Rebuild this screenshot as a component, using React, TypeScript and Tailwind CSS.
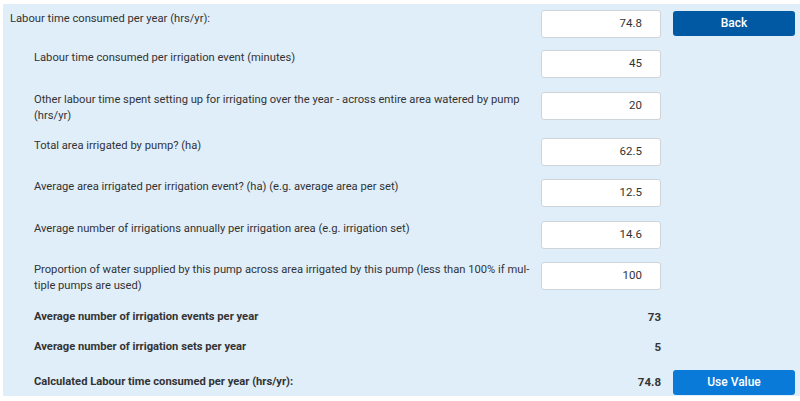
import React from "react";

const font = { fontFamily: "Roboto, 'Liberation Sans', Arial, sans-serif" };

function Input({ value }: { value: string }) {
  return (
    <div className="w-[120px] h-[28px] shrink-0 bg-white border border-[#cfd4d9] rounded-[3px] flex items-center justify-end pr-[18px] text-[11.5px] text-[#333]">
      {value}
    </div>
  );
}

function Row({
  label,
  value,
  className = "",
}: {
  label: React.ReactNode;
  value: string;
  className?: string;
}) {
  return (
    <div className={`flex items-start ${className}`}>
      <div className="flex-1 pl-6 pr-[4px] text-[11.2px] leading-4 text-[#333]">{label}</div>
      <Input value={value} />
      <div className="w-[122px] ml-[12px] shrink-0" />
    </div>
  );
}

function Calc({ label, value, button }: { label: string; value: string; button?: React.ReactNode }) {
  return (
    <div className="flex items-center">
      <div className="flex-1 pl-6 text-[11.2px] leading-4 font-bold text-[#333]">{label}</div>
      <div className="w-[120px] shrink-0 text-right text-[11.5px] leading-4 font-bold text-[#333]">{value}</div>
      <div className="w-[122px] ml-[12px] shrink-0">{button}</div>
    </div>
  );
}

export default function App() {
  return (
    <div className="w-[800px] h-[401px] bg-white pt-[4px] pl-[3px]" style={font}>
      <div className="bg-[#e0eefa] h-[392px] pl-[7px] pr-[5px] pt-[6px]">
        <div className="flex flex-col">
          <div className="flex items-start">
            <div className="flex-1 pr-[4px] text-[11.2px] leading-4 pt-[1px] text-[#333]">
              Labour time consumed per year (hrs/yr):
            </div>
            <Input value="74.8" />
            <div className="w-[122px] ml-[12px] shrink-0">
              <button className="w-full h-[25px] -mt-[1px] rounded-[3px] bg-[#0159a4] text-white text-[12px] font-medium">
                Back
              </button>
            </div>
          </div>
          <Row className="mt-[12px]" label="Labour time consumed per irrigation event (minutes)" value="45" />
          <Row
            className="mt-[14px]"
            label="Other labour time spent setting up for irrigating over the year - across entire area watered by pump (hrs/yr)"
            value="20"
          />
          <Row className="mt-[14px]" label="Total area irrigated by pump? (ha)" value="62.5" />
          <Row
            className="mt-[13px]"
            label="Average area irrigated per irrigation event? (ha) (e.g. average area per set)"
            value="12.5"
          />
          <Row
            className="mt-[14px]"
            label="Average number of irrigations annually per irrigation area (e.g. irrigation set)"
            value="14.6"
          />
          <Row
            className="mt-[13px]"
            label={"Proportion of water supplied by this pump across area irrigated by this pump (less than 100% if mul\u00ADtiple pumps are used)"}
            value="100"
          />
        </div>
        <div className="mt-[15px] flex flex-col gap-[14px]">
          <Calc label="Average number of irrigation events per year" value="73" />
          <Calc label="Average number of irrigation sets per year" value="5" />
          <Calc
            label="Calculated Labour time consumed per year (hrs/yr):"
            value="74.8"
            button={
              <button className="w-full h-[25px] rounded-[3px] bg-[#0a7ad8] text-white text-[12px] font-medium">
                Use Value
              </button>
            }
          />
        </div>
      </div>
    </div>
  );
}
